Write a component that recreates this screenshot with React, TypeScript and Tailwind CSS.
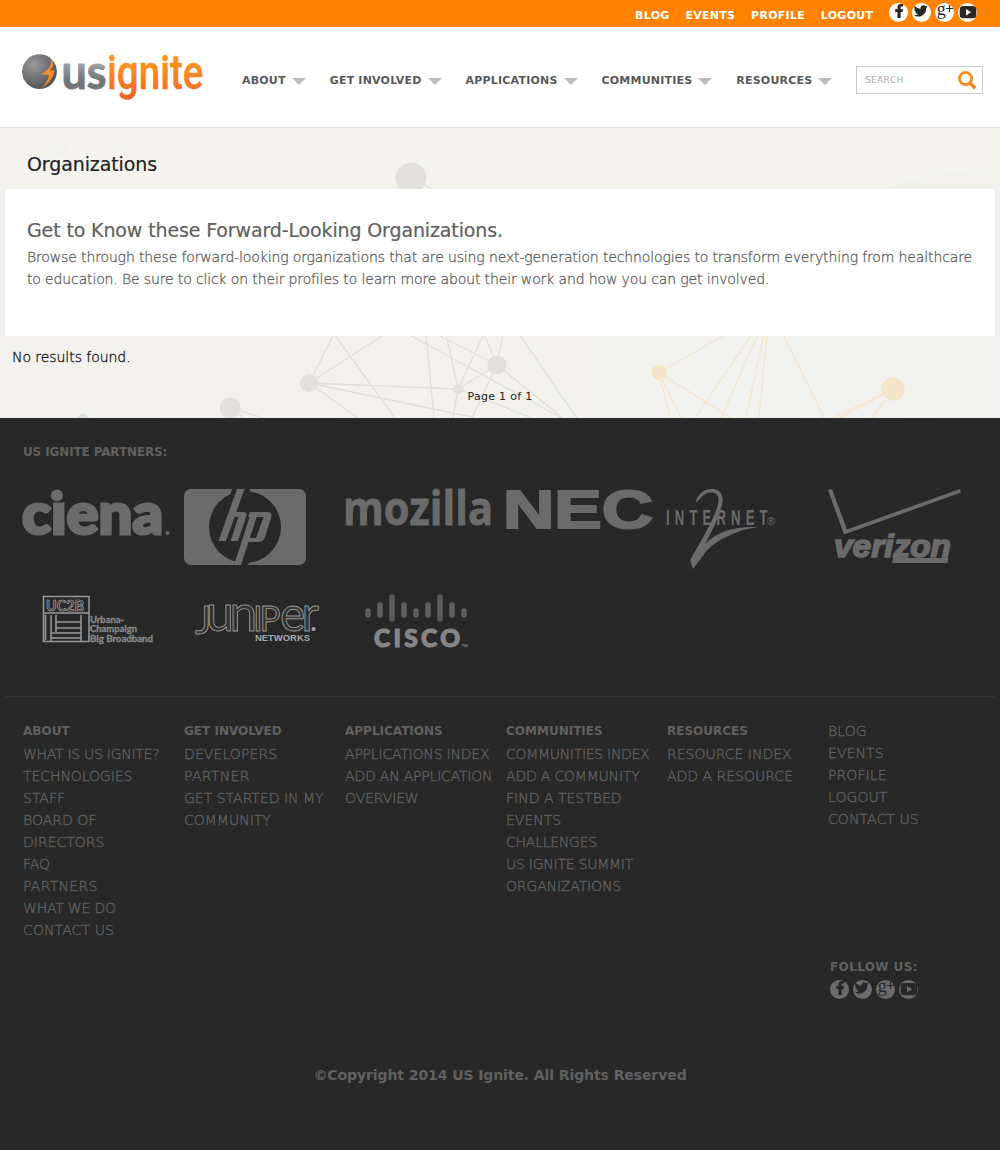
import React from "react";
import { FaTwitter, FaFacebookF } from "react-icons/fa";

const GRAY = "#6b6b6b";

function SocialIcons({ disc, glyph }: { disc: string; glyph: string }) {
  return (
    <div className="flex gap-1">
      <svg className="h-[19px] w-[19px]" viewBox="0 0 19 19">
        <circle cx="9.5" cy="9.5" r="9.5" fill={disc} />
        <FaFacebookF x={3.2} y={1} width={12} height={16.5} color={glyph} stroke={glyph} strokeWidth={16} />
      </svg>
      <svg className="h-[19px] w-[19px]" viewBox="0 0 19 19">
        <circle cx="9.5" cy="9.5" r="9.5" fill={disc} />
        <FaTwitter x={1.7} y={0.9} width={16.5} height={16.5} color={glyph} />
      </svg>
      <svg className="h-[19px] w-[19px] overflow-visible" viewBox="0 0 19 19">
        <circle cx="9.5" cy="9.5" r="9.5" fill={disc} />
        <text x="1.800" y="11.800" fontSize="18" fontFamily="Liberation Serif, serif" fill={glyph}>g</text>
        <path d="M11 5.5h7M14.5 2v7" stroke={glyph} strokeWidth="1.2" />
      </svg>
      <svg className="h-[19px] w-[19px]" viewBox="0 0 19 19">
        <circle cx="9.5" cy="9.5" r="9.5" fill={disc} />
        <rect x="1.7" y="3" width="16.600" height="12.300" rx="3.500" fill={glyph} />
        <path d="M8 6l5 3.200L8 12.500z" fill={disc} />
      </svg>
    </div>
  );
}

function Logo() {
  return (
    <svg className="mt-6 ml-[21px] h-[52px] w-[184px] shrink-0 overflow-visible" viewBox="21 51 184 52">
      <defs>
        <radialGradient id="ball" cx="0.35" cy="0.3" r="0.8">
          <stop offset="0" stopColor="#98999c" />
          <stop offset="1" stopColor="#4d4d50" />
        </radialGradient>
        <linearGradient id="steel" gradientUnits="userSpaceOnUse" x1="0" y1="64" x2="0" y2="90">
          <stop offset="0" stopColor="#a0a1a4" />
          <stop offset="0.6" stopColor="#747579" />
        </linearGradient>
        <linearGradient id="flame" gradientUnits="userSpaceOnUse" x1="0" y1="54" x2="0" y2="100">
          <stop offset="0" stopColor="#fb971d" />
          <stop offset="0.35" stopColor="#f98b22" />
          <stop offset="1" stopColor="#f1602a" />
        </linearGradient>
      </defs>
      <circle cx="39.5" cy="71.7" r="17.4" fill="url(#ball)" />
      <path d="M50.500 58.500C54.500 63 54 66 50 70.500L54.500 70.800C53 78 49 84 41 88.500C46 84 48 80 49 74.800L41 74.500C47 70 53 66 50.500 58.500Z" fill="#f58a2c" />
      <text x="61.500" y="88.500" fontFamily="Lato" fontSize="48" fontWeight="700" stroke="url(#steel)" strokeWidth="1" strokeLinejoin="round" textLength="45" lengthAdjust="spacingAndGlyphs" fill="url(#steel)">us</text>
      <text x="107" y="88.700" fontFamily="Roboto" fontSize="48.500" fontWeight="500" stroke="url(#flame)" strokeWidth=".4" strokeLinejoin="round" textLength="96.500" lengthAdjust="spacingAndGlyphs" fill="url(#flame)">ignite</text>
    </svg>
  );
}

function Network() {
  return (
    <svg className="absolute inset-0 h-[290px] w-full" viewBox="0 128 1000 290" preserveAspectRatio="none">
      <defs>
        <linearGradient id="paper">
          <stop offset="0" stopColor="#f3f2ee" />
          <stop offset="0.25" stopColor="#f4f1ec" />
          <stop offset="0.5" stopColor="#f4f2ed" />
          <stop offset="0.7" stopColor="#f2f2ee" />
          <stop offset="1" stopColor="#f0f0ed" />
        </linearGradient>
      </defs>
      <rect y="128" width="1000" height="70" fill="#f4f3ee" />
      <rect y="189" width="1000" height="229" fill="url(#paper)" />
      <g fill="#f2f1ec">
        <circle cx="58" cy="147" r="10" />
        <circle cx="128" cy="148" r="8" />
        <path d="M880 190Q940 170 1000 168V190Z" />
      </g>
      <g stroke="#e0dfdb" strokeWidth="1.300" fill="none">
        <path d="M411 177L435 191M309 383L334 334M309 383L385 334M334 334L395 418M309 383L458 389L532 418M309 383L358 418M309 383L472 417M230 408L267 419M230 408L245 419M426 334L434 418M446 334L458 389L453 418M458 389L484 334M458 389L497 365M408 334L562 418M497 365L436 334M497 365L484 334M497 365L503 334M497 365L472 418M497 365L563 418M519 334L577 418" />
      </g>
      <g fill="#e1e0dc">
        <circle cx="411" cy="178" r="15.500" />
        <circle cx="309" cy="383" r="9" />
        <circle cx="230" cy="408" r="10.500" />
        <circle cx="497" cy="365" r="9.500" />
        <circle cx="458" cy="389" r="5" />
        <circle cx="83" cy="420" r="6" />
      </g>
      <g stroke="#f5e5cb" strokeWidth="1.300" fill="none">
        <path d="M659 373L726 334M659 373L670 418M659 373L681 418M659 373L732 418M752 334L695 418M758 334L721 418M764 334L746 418M767 334L759 418M783 334L824 418M893 389L833 418M893 389L840 418M893 389L872 418" />
      </g>
      <g fill="#f4e4c9">
        <circle cx="659" cy="372.500" r="7.500" />
        <circle cx="893" cy="389" r="11.500" />
      </g>
    </svg>
  );
}

function Partners() {
  return (
    <div className="ml-[23px] grid grid-cols-[repeat(6,147px)] gap-x-[14px] gap-y-[14px]">
      <svg className="h-20 w-[147px] overflow-visible" viewBox="23 489 147 80" fill={GRAY}>
        <text x="22" y="534" fontFamily="Lato" fontWeight="900" fontSize="58" stroke={GRAY} strokeWidth="3" textLength="141" lengthAdjust="spacingAndGlyphs">cıena</text>
        <circle cx="57" cy="495.500" r="6" />
        <circle cx="167.500" cy="533" r="2" />
      </svg>
      <svg className="h-20 w-[147px] overflow-visible" viewBox="184 489 147 80">
        <rect x="184" y="489" width="122" height="76" rx="7" fill={GRAY} />
        <circle cx="245" cy="527" r="36" fill="#282828" />
        <path d="M232 489H250L248 495H230ZM234 565H248L251 557H237Z" fill="#282828" />
        <path d="M237 489H244.500L226 541H218.500ZM250 516H257L241 565H234Z" fill={GRAY} />
        <path d="M232 512H243Q248 512 246 517L238 541H230.500L238.500 517H231ZM250 512H267Q273 512 271 518L265 537Q263.500 542 258 542H248L249.500 538H256L263.500 517H248Z" fill={GRAY} />
      </svg>
      <svg className="h-20 w-[147px] overflow-visible" viewBox="345 489 147 80" fill={GRAY}>
        <text x="343" y="524.500" fontFamily="Open Sans" fontWeight="700" fontSize="46" stroke={GRAY} strokeWidth=".8" textLength="150" lengthAdjust="spacingAndGlyphs">mozilla</text>
      </svg>
      <svg className="h-20 w-[147px] overflow-visible" viewBox="506 489 147 80" fill={GRAY}>
        <text x="503" y="527.500" fontFamily="Liberation Sans" fontWeight="700" fontSize="53" stroke={GRAY} strokeWidth="2" textLength="150" lengthAdjust="spacingAndGlyphs">NEC</text>
      </svg>
      <svg className="h-20 w-[147px] overflow-visible" viewBox="667 489 147 80" fill={GRAY}>
        <g transform="translate(666 525) scale(.58 1)">
          <text fontFamily="Liberation Sans" fontWeight="700" fontSize="22.500" textLength="175">INTERNET</text>
        </g>
        <text x="767" y="525" fontFamily="Liberation Sans" fontSize="11">®</text>
        <path d="M695.500 502C698 493 706 488.500 713 489C721 489.500 724 496 722 505C719 518 712 531 705 544C717 531 736 526 759 527C739 529 715 540 705 553L693 569L690 560C700 543 715 518 718 504C719.500 496 717 492.500 711 492.500C704 492.500 701 498 697 502Z" />
      </svg>
      <svg className="h-20 w-[147px] overflow-visible" viewBox="828 489 147 80" fill={GRAY}>
        <path d="M828 490L832 489L847 529.500L960 489L961 492.500L844 534.500Z" />
        <text x="834" y="556.500" fontFamily="Liberation Sans" fontWeight="700" fontStyle="italic" fontSize="32" stroke={GRAY} strokeWidth="1.600" textLength="117" lengthAdjust="spacingAndGlyphs">verizon</text>
        <path d="M894 554L900 558H948.500L947.500 563H892Z" />
      </svg>
      <svg className="h-20 w-[147px] overflow-visible" viewBox="23 583 147 80" fill="none" stroke="#999" strokeWidth="1.500">
        <path d="M43.500 596.500H89V641.500H43.500ZM43 613H89M51 615V641M56 615V632M81 615V641M56 622H81M56 628H81M51 633H81M51 638H81M45.500 615V640" />
        <text x="46" y="610.500" fontFamily="Lato" fontWeight="700" fontSize="15" strokeWidth=".7" stroke="#aaa" textLength="38" lengthAdjust="spacingAndGlyphs">UC2B</text>
        <g fill="#898989" stroke="#898989" strokeWidth=".3" fontFamily="Lato" fontWeight="700" fontSize="8.500">
          <text x="90" y="622.500" textLength="34" lengthAdjust="spacingAndGlyphs">Urbana-</text>
          <text x="90" y="632" textLength="47" lengthAdjust="spacingAndGlyphs">Champaign</text>
          <text x="90" y="641.500" textLength="63" lengthAdjust="spacingAndGlyphs">Big Broadband</text>
        </g>
      </svg>
      <svg className="h-20 w-[147px] overflow-visible" viewBox="184 583 147 80">
        <text y="631" fontFamily="Lato" fill="#343434" stroke="#989898" strokeWidth=".9">
          <tspan x="195" dy="3" fontSize="39">J</tspan>
          <tspan x="206 229.500" dy="-3" fontSize="50">un</tspan>
          <tspan x="253 259.500" fontSize="35">IP</tspan>
          <tspan x="280 301.500" fontSize="48">er</tspan>
        </text>
        <circle cx="313.500" cy="629" r="2" fill="#aaa" />
        <text x="255" y="640.500" fontFamily="Liberation Sans" fontWeight="700" fontSize="9" fill="#a8a8a8" textLength="55" lengthAdjust="spacingAndGlyphs">NETWORKS</text>
      </svg>
      <svg className="h-20 w-[147px] overflow-visible" viewBox="345 583 147 80">
        <g stroke="#5e5e5e" strokeWidth="5.500" strokeLinecap="round">
          <path d="M368 611v4M380 605v10M392 597v22M404 605v10M416 611v4M428 605v10M440 597v22M452 605v10M464 611v4" />
        </g>
        <text x="374" y="646.500" fontFamily="Lato" fontWeight="900" fontSize="24.500" fill="#858585" stroke="#858585" strokeWidth="1.200" textLength="86" lengthAdjust="spacing">CISCO</text>
        <text x="461" y="649" fontFamily="Liberation Sans" fontSize="7" fill="#999">™</text>
      </svg>
    </div>
  );
}

const nav = ["ABOUT", "GET INVOLVED", "APPLICATIONS", "COMMUNITIES", "RESOURCES"];

type FooterLink = { label: string; tracking?: string };

const columns: { title: string; links: FooterLink[] }[] = [
  {
    title: "ABOUT",
    links: [
      { label: "WHAT IS US IGNITE?", tracking: "tracking-[-0.28px]" },
      { label: "TECHNOLOGIES", tracking: "tracking-[-0.08px]" },
      { label: "STAFF" },
      { label: "BOARD OF DIRECTORS" },
      { label: "FAQ" },
      { label: "PARTNERS", tracking: "tracking-[0.3px]" },
      { label: "WHAT WE DO", tracking: "tracking-[-0.2px]" },
      { label: "CONTACT US", tracking: "tracking-[0.1px]" },
    ],
  },
  {
    title: "GET INVOLVED",
    links: [
      { label: "DEVELOPERS", tracking: "tracking-[0.1px]" },
      { label: "PARTNER", tracking: "tracking-[0.35px]" },
      { label: "GET STARTED IN MY COMMUNITY" },
    ],
  },
  {
    title: "APPLICATIONS",
    links: [
      { label: "APPLICATIONS INDEX", tracking: "tracking-[-0.2px]" },
      { label: "ADD AN APPLICATION", tracking: "tracking-[-0.2px]" },
      { label: "OVERVIEW", tracking: "tracking-[-0.12px]" },
    ],
  },
  {
    title: "COMMUNITIES",
    links: [
      { label: "COMMUNITIES INDEX", tracking: "tracking-[-0.3px]" },
      { label: "ADD A COMMUNITY", tracking: "tracking-[-0.2px]" },
      { label: "FIND A TESTBED" },
      { label: "EVENTS" },
      { label: "CHALLENGES", tracking: "tracking-[-0.25px]" },
      { label: "US IGNITE SUMMIT", tracking: "tracking-[-0.25px]" },
      { label: "ORGANIZATIONS", tracking: "tracking-[-0.15px]" },
    ],
  },
  {
    title: "RESOURCES",
    links: [{ label: "RESOURCE INDEX" }, { label: "ADD A RESOURCE" }],
  },
];

const topLinks = ["BLOG", "EVENTS", "PROFILE", "LOGOUT"];

function FooterItem({ label, tracking = "tracking-normal" }: FooterLink) {
  const wraps = label.length > 18 || label === "BOARD OF DIRECTORS";
  return (
    <a className={`block leading-[22px] font-extralight [-webkit-text-stroke:0.35px_#606060] ${wraps ? "" : "whitespace-nowrap"} ${tracking}`}>
      {label}
    </a>
  );
}

export default function App() {
  return (
    <div className="h-[1150px] w-[1000px] overflow-hidden bg-[#282828] font-['DejaVu_Sans',sans-serif] text-sm">
      <div className="flex h-[27px] justify-end bg-[#ff8200] pr-[23px]">
        <nav className="mr-[15.7px] flex gap-[15.8px] pt-1 text-[11px] leading-[23px] font-bold tracking-[0.28px] text-white">
          {topLinks.map((l) => <a key={l}>{l}</a>)}
        </nav>
        <div className="pt-[3px]"><SocialIcons disc="#fff" glyph="#282828" /></div>
      </div>
      <header className="flex h-[101px] border-b border-[#dddddb] bg-white">
        <Logo />
        <nav className="mt-[42px] ml-[37px] flex gap-6 text-[11px] leading-6 font-bold tracking-[0.2px] text-[#58595b]">
          {nav.map((n) => (
            <a key={n} className="flex h-6 items-center gap-1.5 whitespace-nowrap">
              {n}
              <svg className="h-[7px] w-[14px]" viewBox="0 0 14 7"><path d="M0 0h14L7 7z" fill="#bcbcbc" /></svg>
            </a>
          ))}
        </nav>
        <div className="mt-[39px] mr-[17px] ml-auto flex h-7 w-[127px] items-center justify-between border border-[#ccc] pr-1.5 pl-2">
          <span className="text-[9px] tracking-[0.35px] text-[#a9a9a9]">SEARCH</span>
          <svg className="h-[18px] w-[18px]" viewBox="0 0 18 18" fill="none" stroke="#f68b1f">
            <circle cx="7.500" cy="7.500" r="6.100" strokeWidth="2.700" />
            <path d="M12.200 12.200l4 4" strokeWidth="3.600" strokeLinecap="round" />
          </svg>
        </div>
      </header>
      <main className="relative h-[290px]">
        <Network />
        <div className="relative">
          <h1 className="h-[61px] pt-[22px] pl-[27px] text-[19px] leading-7 tracking-[-0.1px] text-[#222] [-webkit-text-stroke:0.2px_#222]">Organizations</h1>
          <section className="mx-[5px] h-[147px] bg-white px-[22px] pt-[27px] text-[#606060]">
            <h2 className="text-[19px] leading-7 tracking-[-0.13px] [-webkit-text-stroke:0.2px_#606060]">Get to Know these Forward-Looking Organizations.</h2>
            <p className="mt-[2px] font-extralight text-sm leading-[22px] tracking-[-0.135px] [-webkit-text-stroke:0.3px_#606060]">
              Browse through these forward-looking organizations that are using next-generation technologies to transform everything from healthcare to education. Be sure to click on their profiles to learn more about their work and how you can get involved.
            </p>
          </section>
          <p className="mt-[10px] pl-3 leading-[22px] font-extralight tracking-[-0.05px] text-[#111] [-webkit-text-stroke:0.3px_#111]">No results found.</p>
          <p className="mt-[19px] text-center text-[11px] leading-5 tracking-[0.3px] text-[#222]">Page 1 of 1</p>
        </div>
      </main>
      <footer className="text-[#606060]">
        <h3 className="pt-[22px] pl-[23px] text-xs leading-6 font-bold tracking-[-0.13px]">US IGNITE PARTNERS:</h3>
        <div className="mt-[25px]"><Partners /></div>
        <div className="mx-[5px] mt-[33px] border-t border-[#353535]" />
        <div className="ml-[23px] grid h-[239px] grid-cols-[repeat(6,147px)] gap-x-[14px] pt-[23px]">
          {columns.map((c) => (
            <div key={c.title}>
              <h4 className="mb-px text-xs leading-[22px] font-bold">{c.title}</h4>
              {c.links.map((l) => <FooterItem key={l.label} {...l} />)}
            </div>
          ))}
          <div>
            {[...topLinks, "CONTACT US"].map((l) => <FooterItem key={l} label={l} tracking="tracking-[0.08px]" />)}
          </div>
        </div>
        <div className="mt-[19px] ml-[830px]">
          <h4 className="mb-px text-xs leading-6 font-bold tracking-[0.38px]">FOLLOW US:</h4>
          <SocialIcons disc={GRAY} glyph="#282828" />
        </div>
        <p className="mt-[64px] text-center text-sm leading-6 font-bold tracking-[-0.09px]">©Copyright 2014 US Ignite. All Rights Reserved</p>
      </footer>
    </div>
  );
}
